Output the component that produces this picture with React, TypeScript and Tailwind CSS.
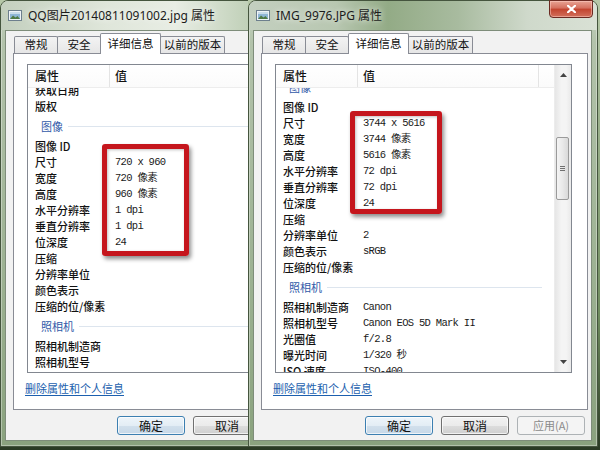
import React from "react";

type Item = { g?: boolean; l: string; v?: string };

const leftItems: Item[] = [
  { l: "获取日期" },
  { l: "版权" },
  { g: true, l: "图像" },
  { l: "图像 ID" },
  { l: "尺寸", v: "720 x 960" },
  { l: "宽度", v: "720 像素" },
  { l: "高度", v: "960 像素" },
  { l: "水平分辨率", v: "1 dpi" },
  { l: "垂直分辨率", v: "1 dpi" },
  { l: "位深度", v: "24" },
  { l: "压缩" },
  { l: "分辨率单位" },
  { l: "颜色表示" },
  { l: "压缩的位/像素" },
  { g: true, l: "照相机" },
  { l: "照相机制造商" },
  { l: "照相机型号" },
];

const rightItems: Item[] = [
  { g: true, l: "图像" },
  { l: "图像 ID" },
  { l: "尺寸", v: "3744 x 5616" },
  { l: "宽度", v: "3744 像素" },
  { l: "高度", v: "5616 像素" },
  { l: "水平分辨率", v: "72 dpi" },
  { l: "垂直分辨率", v: "72 dpi" },
  { l: "位深度", v: "24" },
  { l: "压缩" },
  { l: "分辨率单位", v: "2" },
  { l: "颜色表示", v: "sRGB" },
  { l: "压缩的位/像素" },
  { g: true, l: "照相机" },
  { l: "照相机制造商", v: "Canon" },
  { l: "照相机型号", v: "Canon EOS 5D Mark II" },
  { l: "光圈值", v: "f/2.8" },
  { l: "曝光时间", v: "1/320 秒" },
  { l: "ISO 速度", v: "ISO-400" },
];

function TitleIcon() {
  return (
    <svg width="14" height="11" viewBox="0 0 14 11" className="shrink-0">
      <rect x="0.5" y="0.5" width="13" height="10" fill="#eef3f7" stroke="#6d7f8d" />
      <rect x="2" y="2" width="10" height="7" fill="#8fb6d6" />
      <path d="M2 9 L5 5.5 L7.5 7.5 L9.5 6 L12 9 Z" fill="#4f7a45" />
      <rect x="2" y="2" width="10" height="2" fill="#c9dcea" />
    </svg>
  );
}

function ScrollBar() {
  return (
    <div className="w-[17px] h-full shrink-0 flex flex-col items-center bg-[linear-gradient(90deg,#e6e6e6,#f4f4f4_40%,#f4f4f4_70%,#e9e9e9)] border-l border-[#ececec]">
      <div className="h-[20px] w-full flex items-center justify-center">
        <svg width="7" height="4" viewBox="0 0 7 4">
          <path d="M0 4 L3.5 0 L7 4 Z" fill="#444" />
        </svg>
      </div>
      <div className="flex-1 w-full relative">
        <div className="absolute left-[1px] right-[2px] top-[52px] h-[63px] rounded-[2px] border border-[#9a9a9a] bg-[linear-gradient(90deg,#f4f4f4,#e9e9e9_50%,#d9d9d9)] flex flex-col items-center justify-center gap-[1px]">
          <div className="w-[5px] h-px bg-[#707070]" />
          <div className="w-[5px] h-px bg-[#707070]" />
          <div className="w-[5px] h-px bg-[#707070]" />
        </div>
      </div>
      <div className="h-[20px] w-full flex items-center justify-center">
        <svg width="7" height="4" viewBox="0 0 7 4">
          <path d="M0 0 L3.5 4 L7 0 Z" fill="#444" />
        </svg>
      </div>
    </div>
  );
}

function PropList({ items, offsetClass }: { items: Item[]; offsetClass: string }) {
  return (
    <div className="w-[297px] h-[309px] border border-[#828790] bg-white flex overflow-hidden">
      <div className="flex-1 flex flex-col min-w-0">
        <div className="h-[23px] shrink-0 flex border-b border-[#ededed] bg-[linear-gradient(180deg,#ffffff,#fbfbfb)] text-[12px] text-[#111] font-medium font-['Noto_Sans_CJK_SC',sans-serif]">
          <div className="w-[82px] pl-[7px] flex items-center border-r border-[#e4e4e4]">属性</div>
          <div className="w-[181px] pl-[5px] flex items-center border-r border-[#e4e4e4]">值</div>
          <div className="flex-1" />
        </div>
        <div className="flex-1 overflow-hidden">
          <div className={offsetClass}>
            {items.map((it, i) =>
              it.g ? (
                <div key={i} className="h-[24px] flex items-center pl-[13px] pr-[12px]">
                  <span className="text-[11px] leading-none text-[#3159a8] font-['Noto_Sans_CJK_SC',sans-serif]">{it.l}</span>
                  <div className="ml-[5px] flex-1 h-px bg-[#dde5ee]" />
                </div>
              ) : (
                <div key={i} className="h-[16px] flex items-center whitespace-nowrap">
                  <div className="w-[82px] pl-[7px] text-[11px] leading-none text-[#111] font-medium font-['Noto_Sans_CJK_SC',sans-serif]">{it.l}</div>
                  <div className="pl-[5px] text-[10.5px] leading-none tracking-[-0.7px] text-[#1a1a1a] font-['Liberation_Mono','Noto_Sans_CJK_SC',monospace]">{it.v ?? ""}</div>
                </div>
              )
            )}
          </div>
        </div>
      </div>
      <ScrollBar />
    </div>
  );
}

function Tab({ label, active, w }: { label: string; active?: boolean; w: string }) {
  if (active) {
    return (
      <div className={`${w} h-[21px] -mb-px -ml-px relative z-10 border border-b-0 border-[#898c95] rounded-t-[2px] bg-white flex items-center justify-center text-[11.5px] text-[#111] font-['Noto_Sans_CJK_SC',sans-serif]`}>
        {label}
      </div>
    );
  }
  return (
    <div className={`${w} h-[17px] -ml-px border border-b-0 border-[#898c95] rounded-t-[2px] bg-[linear-gradient(180deg,#f3f3f3,#e6e6e6)] flex items-center justify-center text-[11.5px] text-[#111] font-['Noto_Sans_CJK_SC',sans-serif]`}>
      {label}
    </div>
  );
}

function Btn({ label, kind }: { label: string; kind?: "default" | "disabled" }) {
  if (kind === "default") {
    return (
      <div className="w-[68px] h-[19px] rounded-[3px] border border-[#3c7fb1] bg-[linear-gradient(180deg,#eef5fa,#e3edf5_50%,#d2e0ec_51%,#c6d8e8)] flex items-center justify-center text-[12px] text-[#111] font-['Noto_Sans_CJK_SC',sans-serif] shadow-[inset_0_0_0_1px_rgba(255,255,255,0.7)]">
        {label}
      </div>
    );
  }
  if (kind === "disabled") {
    return (
      <div className="w-[68px] h-[19px] rounded-[3px] border border-[#adb2b5] bg-[#f4f4f4] flex items-center justify-center text-[11px] text-[#8a8a8a] font-['Noto_Sans_CJK_SC',sans-serif]">
        {label}
      </div>
    );
  }
  return (
    <div className="w-[68px] h-[19px] rounded-[3px] border border-[#707070] bg-[linear-gradient(180deg,#f2f2f2,#ebebeb_50%,#dddddd_51%,#cfcfcf)] flex items-center justify-center text-[12px] text-[#111] font-['Noto_Sans_CJK_SC',sans-serif] shadow-[inset_0_0_0_1px_rgba(255,255,255,0.7)]">
      {label}
    </div>
  );
}

function Window({
  title,
  titleClass,
  items,
  offsetClass,
  boxClass,
}: {
  title: string;
  titleClass: string;
  items: Item[];
  offsetClass: string;
  boxClass: string;
}) {
  return (
    <div className="relative w-[350px] h-[447px] shrink-0 rounded-t-[8px] border border-[#45553e] bg-[linear-gradient(180deg,#c9d5c4_0px,#b3c3ab_40px,#9db293_60%,#8aa27e_100%)] flex flex-col shadow-[inset_0_0_0_1px_rgba(255,255,255,0.35)]">
      <div className={`h-[29px] shrink-0 flex items-center rounded-t-[7px] ${titleClass}`}>
        <div className="ml-[7px]">
          <TitleIcon />
        </div>
        <div className="ml-[6px] text-[12px] text-[#1b1b1b] whitespace-nowrap font-['Noto_Sans','Noto_Sans_CJK_SC',sans-serif] [text-shadow:0_0_6px_rgba(255,255,255,0.95)]">
          {title}
        </div>
        <div className="flex-1" />
        <div className="self-start mr-[4px] -mt-px w-[44px] h-[18px] rounded-b-[4px] border border-[#6b2a22] bg-[linear-gradient(180deg,#e8a394,#d46f5e_45%,#c2432e_50%,#d2705c)] flex items-center justify-center shadow-[inset_0_0_0_1px_rgba(255,210,200,0.5)]">
          <svg width="9" height="8" viewBox="0 0 9 8">
            <path d="M1 0.8 L8 7.2 M8 0.8 L1 7.2" stroke="#ffffff" strokeWidth="2.2" strokeLinecap="round" />
          </svg>
        </div>
      </div>
      <div className="ml-[4px] mr-[5px] h-[411px] border border-[#7e8d7a] bg-[#f2f2f2] flex flex-col">
        <div className="pt-[2px] pl-[9px] h-[22px] flex items-end">
          <Tab label="常规" w="w-[44px]" />
          <Tab label="安全" w="w-[44px]" />
          <Tab label="详细信息" w="w-[61px]" active />
          <Tab label="以前的版本" w="w-[65px]" />
        </div>
        <div className="ml-[7px] w-[327px] h-[357px] border border-[#898c95] bg-white flex flex-col pt-[10px]">
          <div className="pl-[13px]">
            <PropList items={items} offsetClass={offsetClass} />
          </div>
          <div className="mt-[8px] pl-[11px] text-[11px] leading-[14px] text-[#1c5fae] underline underline-offset-2 font-['Noto_Sans_CJK_SC',sans-serif]">
            删除属性和个人信息
          </div>
        </div>
        <div className="mt-[6px] pr-[6px] flex justify-end gap-[8px]">
          <Btn label="确定" kind="default" />
          <Btn label="取消" />
          <Btn label="应用(A)" kind="disabled" />
        </div>
      </div>
      <div className={`absolute border-[5px] border-[#c5161d] rounded-[3px] shadow-[2px_3px_4px_rgba(0,0,0,0.45),inset_1px_1px_3px_rgba(0,0,0,0.25)] ${boxClass}`} />
    </div>
  );
}

export default function App() {
  return (
    <div className="w-[600px] h-[450px] overflow-hidden flex bg-[linear-gradient(180deg,#b6c8a8,#6f8c5e_70%,#2a3a24)]">
      <div className="w-[248px] h-[450px] shrink-0 overflow-hidden">
        <Window
          title="QQ图片20140811091002.jpg 属性"
          titleClass="bg-[linear-gradient(90deg,#c3cfbe,#dfe6da_30%,#e8ede4_50%,#b9cbb0_75%,#9fb892)]"
          items={leftItems}
          offsetClass="-mt-[6px]"
          boxClass="left-[101px] top-[143px] w-[87px] h-[112px]"
        />
      </div>
      <Window
        title="IMG_9976.JPG 属性"
        titleClass="bg-[linear-gradient(90deg,#c4d0c0,#b8c7b1_25%,#93ab86_40%,#a8bb9f_60%,#cfd9cb_80%,#d9e1d5)]"
        items={rightItems}
        offsetClass="-mt-[13px]"
        boxClass="left-[101px] top-[110px] w-[92px] h-[103px]"
      />
    </div>
  );
}
